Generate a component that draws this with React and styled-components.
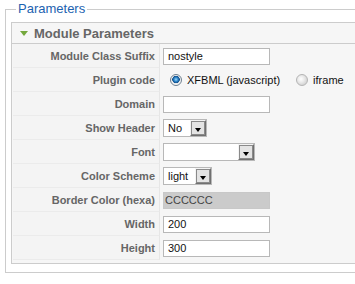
import React from 'react';
import styled, { createGlobalStyle } from 'styled-components';

const GlobalStyle = createGlobalStyle`
  html, body {
    margin: 0;
    padding: 0;
    overflow: hidden;
    background: #fff;
    font-family: 'Liberation Sans', Arial, sans-serif;
  }
`;

const Fieldset = styled.fieldset`
  margin: 0 0 0 5px;
  padding: 4px 5px 8px 5px;
  border: 1px solid #cccccc;
  width: 420px;
`;

const Legend = styled.legend`
  padding: 0 2px;
  margin-left: 5px;
  font-size: 13px;
  line-height: 18px;
  color: #1c62b0;
`;

const Panel = styled.div`
  border: 1px solid #cccccc;
  background: #f6f6f6;
  padding-bottom: 3px;
`;

const PanelTitle = styled.h3`
  margin: 0;
  height: 20px;
  display: flex;
  align-items: center;
  gap: 6px;
  padding-left: 8px;
  border-bottom: 1px solid #cccccc;
  font-size: 13px;
  font-weight: bold;
  color: #666666;
`;

const Arrow = styled.span`
  width: 0;
  height: 0;
  border-left: 4px solid transparent;
  border-right: 4px solid transparent;
  border-top: 5px solid #74a83c;
  margin-top: 1px;
`;

const ParamList = styled.div`
  display: flex;
  flex-direction: column;
  padding: 0 1px;
`;

const Row = styled.div`
  display: grid;
  grid-template-columns: 147px 1fr;
  height: 24px;
`;

const Key = styled.div`
  display: flex;
  align-items: center;
  justify-content: flex-end;
  padding-right: 4px;
  background: #f4f4f4;
  border-bottom: 1px solid #ebebeb;
  border-right: 1px solid #e6e6e6;
  font-size: 11px;
  font-weight: bold;
  color: #666666;
`;

const Value = styled.div`
  display: flex;
  align-items: center;
  padding-left: 3px;
  font-size: 11px;
  color: #222;
`;

const TextInput = styled.div`
  box-sizing: border-box;
  width: 107px;
  height: 17px;
  border: 1px solid ${p => (p.$readonly ? '#c8c8c8' : '#b8b8b8')};
  background: ${p => (p.$readonly ? '#cbcbcb' : '#ffffff')};
  color: ${p => (p.$readonly ? '#444' : '#111')};
  font-size: 11px;
  line-height: 15px;
  padding-left: ${p => (p.$readonly ? '1px' : '4px')};
`;

const Select = styled.div`
  box-sizing: border-box;
  width: ${p => p.$width}px;
  height: 18px;
  display: flex;
  align-items: center;
  justify-content: space-between;
  border: 1px solid #b8b8b8;
  background: #fff;
  padding-left: 4px;
  font-size: 11px;
  color: #111;
`;

const DropButton = styled.span`
  box-sizing: border-box;
  width: 16px;
  height: 16px;
  display: flex;
  align-items: center;
  justify-content: center;
  background: #e4e4e4;
  border: 1px solid;
  border-color: #f4f4f4 #707070 #707070 #f4f4f4;
  outline: 1px solid #8a8a8a;
  outline-offset: -2px;

  &::after {
    content: '';
    margin-top: 3px;
    border-left: 3.5px solid transparent;
    border-right: 3.5px solid transparent;
    border-top: 4px solid #000;
  }
`;

const RadioGroup = styled.div`
  display: flex;
  align-items: center;
`;

const Radio = styled.span`
  box-sizing: border-box;
  width: 12px;
  height: 12px;
  border-radius: 50%;
  margin-left: ${p => p.$gap}px;
  margin-right: 5px;
  border: 1px solid ${p => (p.$checked ? '#6d7f8f' : '#b4b4b4')};
  background: ${p =>
    p.$checked
      ? 'radial-gradient(circle at 50% 45%, #9fdcff 0, #2f86c8 2px, #0f4e8c 3.5px, #e8e8e8 4px, #f6f6f6 5px)'
      : 'radial-gradient(circle at 40% 40%, #ffffff 0, #ececec 3px, #d6d6d6 6px)'};
`;

const RadioLabel = styled.span`
  font-size: 11px;
  color: #111;
`;

function SelectField({ width, value }) {
  return (
    <Select $width={width}>
      <span>{value}</span>
      <DropButton />
    </Select>
  );
}

export default function App() {
  return (
    <>
      <GlobalStyle />
      <Fieldset>
        <Legend>Parameters</Legend>
        <Panel>
          <PanelTitle>
            <Arrow />
            Module Parameters
          </PanelTitle>
          <ParamList>
            <Row>
              <Key>Module Class Suffix</Key>
              <Value><TextInput>nostyle</TextInput></Value>
            </Row>
            <Row>
              <Key>Plugin code</Key>
              <Value>
                <RadioGroup>
                  <Radio $checked $gap={7} />
                  <RadioLabel>XFBML (javascript)</RadioLabel>
                  <Radio $gap={16} />
                  <RadioLabel>iframe</RadioLabel>
                </RadioGroup>
              </Value>
            </Row>
            <Row>
              <Key>Domain</Key>
              <Value><TextInput /></Value>
            </Row>
            <Row>
              <Key>Show Header</Key>
              <Value><SelectField width={44} value="No" /></Value>
            </Row>
            <Row>
              <Key>Font</Key>
              <Value><SelectField width={92} value="" /></Value>
            </Row>
            <Row>
              <Key>Color Scheme</Key>
              <Value><SelectField width={49} value="light" /></Value>
            </Row>
            <Row>
              <Key>Border Color (hexa)</Key>
              <Value><TextInput $readonly>CCCCCC</TextInput></Value>
            </Row>
            <Row>
              <Key>Width</Key>
              <Value><TextInput>200</TextInput></Value>
            </Row>
            <Row>
              <Key>Height</Key>
              <Value><TextInput>300</TextInput></Value>
            </Row>
          </ParamList>
        </Panel>
      </Fieldset>
    </>
  );
}
